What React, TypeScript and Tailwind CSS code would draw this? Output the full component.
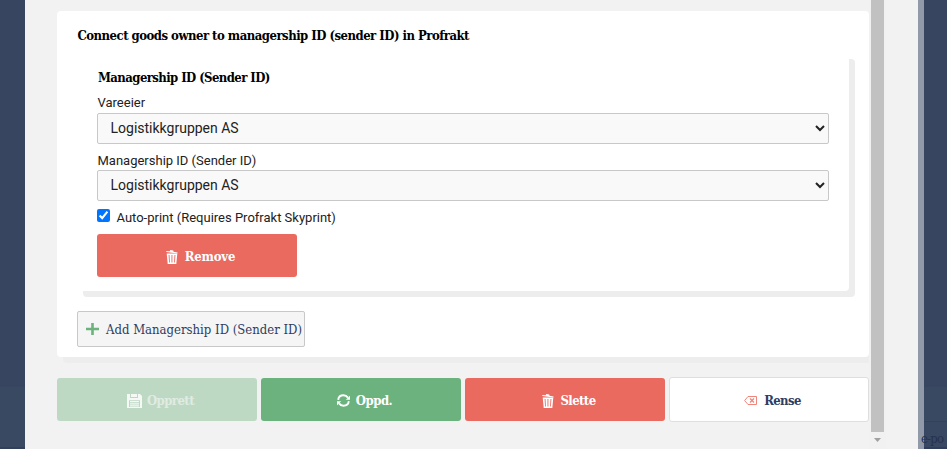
import type { ReactNode } from 'react';

const slab = "font-['Roboto_Slab','DejaVu_Serif_Condensed','DejaVu_Serif',serif]";
const sans = "font-['Roboto',sans-serif]";

function TrashIcon() {
  return (
    <svg width="12" height="14" viewBox="0 0 12 14" fill="currentColor" className="shrink-0">
      <path d="M.3 1 3.6 1.3 4.4 0l2.9.5.2 1.2 4 .8v1.1L.3 2.1z" />
      <path
        fillRule="evenodd"
        d="M.7 3.6h10.6L10.3 14H1.7zM2.6 5l.5 7.4h.8L3.5 5zM5.5 5v7.4h.9V5zM8.5 5l-.4 7.4h.8L9.4 5z"
      />
    </svg>
  );
}

function SaveIcon() {
  return (
    <svg width="15" height="14" viewBox="0 0 15 14" className="shrink-0">
      <path fill="currentColor" fillRule="evenodd" d="M0 0h3v4h8V0h2l2 2v12H0zM8 0h2v3H8zM2 6.3V13h11V6.3z" />
      <path fill="currentColor" d="M4 0h4v3H4zM3 7h9v1.2H3zM3 9.2h9v1.2H3zM3 11.3h9v1.2H3z" />
    </svg>
  );
}

function RefreshIcon() {
  return (
    <svg width="13" height="13" viewBox="0 0 13 13" className="shrink-0">
      <g fill="none" stroke="currentColor" strokeWidth="1.9">
        <path d="M1.2 5.8C1.5 3 3.7 1.2 6.5 1.2c1.9 0 3.4.9 4.4 2.4" />
        <path d="M11.8 7.2c-.3 2.8-2.5 4.6-5.3 4.6-1.9 0-3.4-.9-4.4-2.4" />
      </g>
      <path fill="currentColor" d="M13 1.7v4H8.8zM0 11.3v-4h4.2z" />
    </svg>
  );
}

function ClearIcon() {
  return (
    <svg width="13" height="9" viewBox="0 0 13 9" fill="none" stroke="#f0857b" className="shrink-0">
      <path d="M4 .5h8.5v8H4l-3.4-4z" />
      <path d="m6 2.5 4 4m0-4-4 4" strokeWidth="1.3" />
    </svg>
  );
}

function PlusIcon() {
  return (
    <svg width="13" height="12" viewBox="0 0 13 12" className="shrink-0">
      <path d="M6.5 0v12M0 6h13" stroke="#6cb27e" strokeWidth="2.6" />
    </svg>
  );
}

function Field({ label, className }: { label: string; className: string }) {
  return (
    <label className="block">
      <span className={`block h-[21px] pl-[0.5px] text-[13px] text-[#222] ${className}`}>{label}</span>
      <select className="block h-[31px] w-full rounded-[2px] border border-[#c8c8c8] bg-[#f9f9f9] pb-[2px] pl-[8.5px] text-[14px] text-[#222]">
        <option>Logistikkgruppen AS</option>
      </select>
    </label>
  );
}

function Action({ className, icon, children }: { className: string; icon: ReactNode; children: ReactNode }) {
  return (
    <button
      className={`flex w-[200px] shrink-0 items-center justify-center rounded-[3px] pt-[2px] pl-[7px] text-[13px] font-bold ${slab} ${className}`}
    >
      {icon}
      {children}
    </button>
  );
}

export default function App() {
  return (
    <div className={`flex h-[449px] w-[947px] overflow-hidden bg-[#374561] ${sans}`}>
      <div className="flex w-[25px] shrink-0 flex-col justify-end">
        <div className="h-[60px] bg-[#3a4962]" />
        <div className="h-[2px] bg-[#33405c]" />
      </div>
      <main className="flex w-[893px] shrink-0 bg-[#f2f2f2]">
        <div className="h-full w-[844px] overflow-hidden pt-[11px] pl-8">
          <div className="h-[366px] overflow-hidden">
            <section className="h-[346px] w-[812px] rounded-[4px] bg-white px-5 shadow-[6px_6px_0_#ededed]">
              <h2 className={`h-[42px] pt-[15px] pl-[0.5px] text-[13px] leading-[20px] font-bold whitespace-nowrap text-black ${slab}`}>
                <span className="tracking-[-0.51px]">Connect goods owner to managership ID (sender ID) in Profrakt</span>
              </h2>
              <div className="h-[238px] rounded-[4px] bg-white px-5 pt-[14px] shadow-[6px_6px_0_#ededed]">
                <h3 className={`h-[25px] pt-px pl-px text-[13px] leading-[20px] font-bold whitespace-nowrap text-black ${slab}`}>
                  <span className="tracking-[-0.58px]">Managership ID (Sender ID)</span>
                </h3>
                <div className="flex flex-col gap-[5px]">
                  <Field label="Vareeier" className="leading-[21px]" />
                  <Field label="Managership ID (Sender ID)" className="leading-[23px]" />
                </div>
                <label className="flex h-[33px] items-start pt-2 text-[13px] text-[#222]">
                  <input type="checkbox" defaultChecked className="size-[13px]" />
                  <span className="ml-[6.5px] leading-[18px]">Auto-print (Requires Profrakt Skyprint)</span>
                </label>
                <Action className="h-[43px] gap-[7px] bg-[#ea6a5f] text-white" icon={<TrashIcon />}>
                  <span className="tracking-[-0.2px]">Remove</span>
                </Action>
              </div>
              <button
                className={`mt-5 flex h-9 w-[228px] items-center gap-[7px] rounded-[2px] border border-[#c8c8c8] bg-[#f5f5f5] pl-2 text-[13px] whitespace-nowrap text-[#2e3d61] ${slab}`}
              >
                <PlusIcon />
                <span className="pt-[2px]">Add Managership ID (Sender ID)</span>
              </button>
            </section>
          </div>
          <div className="flex items-center gap-1">
            <Action className="h-[43px] gap-[5px] bg-[#bdd9c4] text-[#e0ebe2]" icon={<span className="text-[#f5f8f5]"><SaveIcon /></span>}>
              <span className="tracking-[-0.55px]">Opprett</span>
            </Action>
            <Action className="h-[43px] gap-[6px] bg-[#6cb27e] text-white" icon={<RefreshIcon />}>
              <span className="tracking-[-0.5px]">Oppd.</span>
            </Action>
            <Action className="h-[43px] gap-[7px] bg-[#ea6a5f] text-white" icon={<TrashIcon />}>
              <span className="tracking-[-0.6px]">Slette</span>
            </Action>
            <Action className="h-[45px] gap-[7px] border border-[#dedede] bg-white text-[#2e3d61]" icon={<ClearIcon />}>
              <span className="tracking-[-0.6px]">Rense</span>
            </Action>
          </div>
        </div>
        <div className="flex w-[17px] flex-col items-center bg-[#f1f1f1]">
          <div className="h-[432px] w-[13px] bg-[#c1c1c1]" />
          <svg width="7" height="4" viewBox="0 0 7 4" className="mt-[6px]">
            <path d="M0 0h7L3.5 4z" fill="#a0a0a0" />
          </svg>
        </div>
      </main>
      <div className="w-[6px] shrink-0 bg-[#919aa8]" />
      <div className="flex w-[23px] shrink-0 flex-col">
        <div className="h-[387px]" />
        <div className="h-[34px] bg-[#3a4962]" />
        <div className={`h-[26px] border-t border-[#33415b] bg-[#384762] pt-[9px] text-[13px] leading-[16px] whitespace-nowrap text-[#26334e] ${slab}`}>
          <span className="-ml-[3px] tracking-[-0.8px]">e-po</span>
        </div>
        <div className="flex-1 bg-[#303e5b]" />
      </div>
    </div>
  );
}
